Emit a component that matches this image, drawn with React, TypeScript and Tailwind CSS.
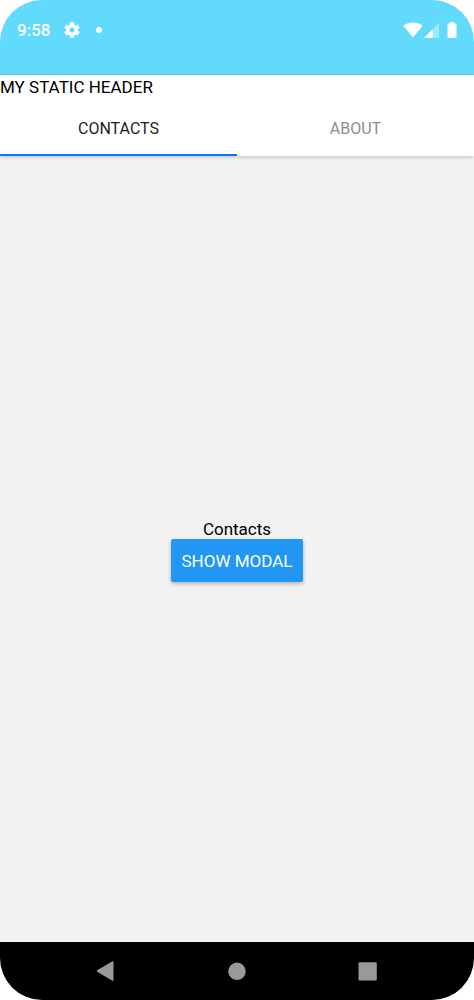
import { useState } from "react";
import clsx from "clsx";

type Tab = "Contacts" | "About";

const TABS: Tab[] = ["Contacts", "About"];

function StatusBar() {
  return (
    <div className="flex h-[75px] items-start justify-between bg-[#61dafb] px-[17px] pt-5 text-white">
      <div className="flex h-5 items-center">
        <span className="text-[17px] leading-5 font-medium">9:58</span>
        <svg viewBox="2 2 20 20" className="ml-3.5 size-4" fill="currentColor">
          <path d="M19.14 12.94c.04-.3.06-.61.06-.94 0-.32-.02-.64-.07-.94l2.03-1.58c.18-.14.23-.41.12-.61l-1.92-3.32c-.12-.22-.37-.29-.59-.22l-2.39.96c-.5-.38-1.03-.7-1.62-.94l-.36-2.54c-.04-.24-.24-.41-.48-.41h-3.84c-.24 0-.43.17-.47.41l-.36 2.54c-.59.24-1.13.57-1.62.94l-2.39-.96c-.22-.08-.47 0-.59.22L2.74 8.87c-.12.21-.08.47.12.61l2.03 1.58c-.05.3-.09.63-.09.94s.02.64.07.94l-2.03 1.58c-.18.14-.23.41-.12.61l1.92 3.32c.12.22.37.29.59.22l2.39-.96c.5.38 1.03.7 1.62.94l.36 2.54c.05.24.24.41.48.41h3.84c.24 0 .44-.17.47-.41l.36-2.54c.59-.24 1.13-.56 1.62-.94l2.39.96c.22.08.47 0 .59-.22l1.92-3.32c.12-.22.07-.47-.12-.61l-2.01-1.58zM12 15.2a3.2 3.2 0 1 1 0-6.4 3.2 3.2 0 0 1 0 6.4z" />
        </svg>
        <span className="ml-4 size-1.5 rounded-full bg-white" />
      </div>
      <div className="flex h-5 items-center">
        <svg viewBox="0 0 20 16" className="h-4 w-5" fill="currentColor">
          <path d="M10 15.4 0.7 4.3C0.4 3.9 0.5 3.5 0.9 3.2 3.3 1.2 6.5 0.4 10 0.4s6.700.8 9.100 2.800c.4.3.5.7.2 1.100z" />
        </svg>
        <svg viewBox="0 0 15 15" className="ml-px h-[15px] w-[15px]" fill="currentColor">
          <path d="M15 0v15H0z" opacity="0.4" />
          <path d="M8.500 6.500V15H0z" />
        </svg>
        <svg viewBox="0 0 10 16" className="ml-2 h-4 w-2.5" fill="currentColor">
          <path d="M3 0h4v1.600h1.500c.6 0 1 .4 1 1V15c0 .6-.4 1-1 1h-7c-.6 0-1-.4-1-1V2.600c0-.6.4-1 1-1H3z" />
        </svg>
      </div>
    </div>
  );
}

function NavigationBar() {
  return (
    <nav className="flex h-[58px] items-center justify-center gap-[111px] bg-black text-[#999999]">
      <button type="button" aria-label="Back" className="size-5">
        <svg viewBox="0 0 20 20" fill="currentColor">
          <path d="M17.500 .8v18.400c0 .6-.6.8-1.100.5L1.200 10.800c-.6-.4-.6-1.200 0-1.600L16.400.3c.5-.3 1.100-.1 1.100.5z" />
        </svg>
      </button>
      <button type="button" aria-label="Home" className="size-5">
        <svg viewBox="0 0 20 20" fill="currentColor">
          <circle cx="10" cy="10.300" r="8.7" />
        </svg>
      </button>
      <button type="button" aria-label="Recent apps" className="size-5">
        <svg viewBox="0 0 20 20" fill="currentColor">
          <rect x="0.500" y="1.200" width="18.300" height="18.300" rx="1.200" />
        </svg>
      </button>
    </nav>
  );
}

export default function App() {
  const [tab, setTab] = useState<Tab>("Contacts");
  const [modalOpen, setModalOpen] = useState(false);

  return (
    <div className="min-h-screen bg-white">
      <div className="flex min-h-screen flex-col overflow-hidden rounded-[42px] bg-[#f2f2f2] font-[Roboto,sans-serif] text-black">
        <StatusBar />

        <header className="z-10 bg-white shadow-[0_1px_4px_rgba(0,0,0,0.2)]">
          <p className="text-[17px] leading-[25px]">MY STATIC HEADER</p>
          <div role="tablist" className="flex">
            {TABS.map((name) => (
              <button
                key={name}
                type="button"
                role="tab"
                aria-selected={tab === name}
                onClick={() => setTab(name)}
                className={clsx(
                  "h-14 flex-1 border-b-2 pt-1 text-[16px] leading-5 uppercase",
                  tab === name
                    ? "border-[#0a78f5] text-[#1c1c1e]"
                    : "border-transparent text-[#8e8e8f]"
                )}
              >
                {name}
              </button>
            ))}
          </div>
        </header>

        <main className="flex flex-1 flex-col items-center justify-center pt-0.5">
          <p className="text-[17px] leading-5">{tab}</p>
          <button
            type="button"
            onClick={() => setModalOpen(true)}
            className="rounded-xs bg-[#2196f3] px-[11px] pt-3 pb-[11px] text-[17px] leading-5 text-white uppercase shadow-[0_2px_4px_rgba(0,0,0,0.25)]"
          >
            Show modal
          </button>
        </main>

        <NavigationBar />
      </div>

      {modalOpen ? (
        <div
          role="dialog"
          aria-label={tab}
          className="fixed inset-0 z-20 flex items-center justify-center bg-black/50"
        >
          <button
            type="button"
            aria-label="Close"
            onClick={() => setModalOpen(false)}
            className="size-10 rounded-full bg-white text-xl"
          >
            ×
          </button>
        </div>
      ) : null}
    </div>
  );
}
